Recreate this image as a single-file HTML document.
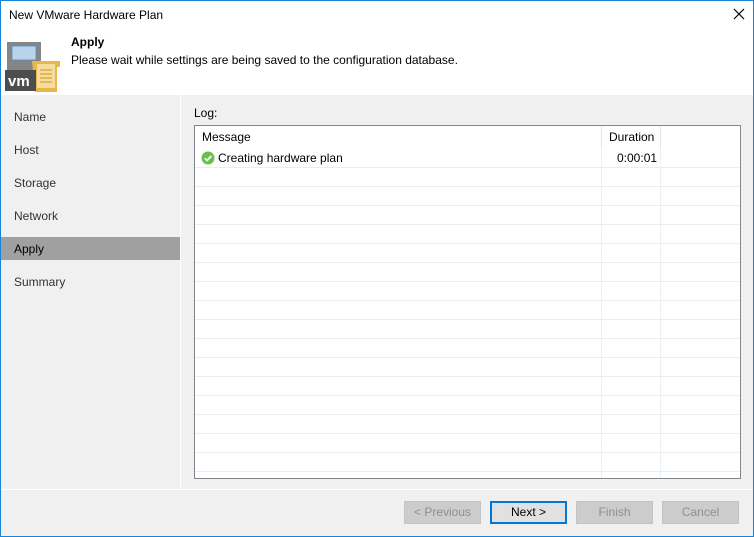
<!DOCTYPE html>
<html><head><style>
*{margin:0;padding:0;box-sizing:border-box}
body{width:754px;height:537px;overflow:hidden;font-family:"Segoe UI","Liberation Sans",sans-serif;font-size:12px;color:#000;background:#f0f0f0;position:relative}
.abs{position:absolute}
#win{left:0;top:0;width:754px;height:537px;border:1px solid #1883d7}
.nav{left:14px;color:#333;font-size:12px}
.row{left:195px;width:544px;height:1px;background:#ececec}
.btn{top:501px;width:77px;height:23px;border:1px solid #c3c3c3;background:#cccccc;color:#8f8f8f;text-align:center;line-height:21px;font-size:12px}
</style></head><body>
<div class="abs" style="left:0;top:0;width:754px;height:95px;background:#fff"></div>
<div class="abs" style="left:9px;top:8px;font-size:12px">New VMware Hardware Plan</div>
<svg class="abs" style="left:733px;top:8px" width="12" height="12"><path d="M1 1L11 11M11 1L1 11" stroke="#000" stroke-width="1.2"/></svg>
<svg class="abs" style="left:5px;top:42px" width="55" height="50">
<rect x="2" y="0" width="34" height="28" fill="#858585"/>
<rect x="7" y="4" width="24" height="14" fill="#b7d3ee" stroke="#5a8ab8" stroke-width="0.8"/>
<path d="M27 19 h28 v6 h-3 v25 h-22 z" fill="#e8b64a"/>
<rect x="32" y="22" width="18" height="24" fill="#f6dc9a"/>
<path d="M35 28h12M35 32h12M35 36h12M35 40h12" stroke="#d3a23a" stroke-width="1.3"/>
<rect x="0" y="28" width="31" height="21" fill="#4d4d4d"/>
<text x="3" y="44" fill="#fff" font-family="Liberation Sans" font-weight="bold" font-size="15">vm</text>
</svg>
<div class="abs" style="left:71px;top:35px;font-weight:bold">Apply</div>
<div class="abs" style="left:71px;top:53px">Please wait while settings are being saved to the configuration database.</div>
<div class="abs" style="left:180px;top:95px;width:1px;height:394px;background:#fff"></div>
<div class="abs nav" style="top:110px">Name</div>
<div class="abs nav" style="top:143px">Host</div>
<div class="abs nav" style="top:176px">Storage</div>
<div class="abs nav" style="top:209px">Network</div>
<div class="abs" style="left:1px;top:237px;width:179px;height:23px;background:#a0a0a0"></div>
<div class="abs nav" style="top:242px;color:#000">Apply</div>
<div class="abs nav" style="top:275px">Summary</div>
<div class="abs" style="left:194px;top:106px">Log:</div>
<div class="abs" style="left:194px;top:125px;width:547px;height:354px;border:1px solid #828790;background:#fff"></div>
<div class="abs" style="left:601px;top:126px;width:1px;height:352px;background:#e9f0f8"></div>
<div class="abs" style="left:660px;top:126px;width:1px;height:352px;background:#e9f0f8"></div>
<div class="abs" style="left:601px;top:126px;width:1px;height:22px;background:#e5e5e5"></div>
<div class="abs" style="left:660px;top:126px;width:1px;height:22px;background:#e5e5e5"></div>
<div class="abs" style="left:202px;top:130px">Message</div>
<div class="abs" style="left:609px;top:130px">Duration</div>
<svg class="abs" style="left:201px;top:151px" width="14" height="14"><circle cx="7" cy="7" r="6.5" fill="#6cbf4a"/><path d="M3.8 7.2l2.3 2.3 4.2-4.5" stroke="#fff" stroke-width="1.8" fill="none"/></svg>
<div class="abs" style="left:218px;top:151px">Creating hardware plan</div>
<div class="abs" style="left:617px;top:151px">0:00:01</div>
<div class="abs row" style="top:167px"></div>
<div class="abs row" style="top:186px"></div>
<div class="abs row" style="top:205px"></div>
<div class="abs row" style="top:224px"></div>
<div class="abs row" style="top:243px"></div>
<div class="abs row" style="top:262px"></div>
<div class="abs row" style="top:281px"></div>
<div class="abs row" style="top:300px"></div>
<div class="abs row" style="top:319px"></div>
<div class="abs row" style="top:338px"></div>
<div class="abs row" style="top:357px"></div>
<div class="abs row" style="top:376px"></div>
<div class="abs row" style="top:395px"></div>
<div class="abs row" style="top:414px"></div>
<div class="abs row" style="top:433px"></div>
<div class="abs row" style="top:452px"></div>
<div class="abs row" style="top:471px"></div>
<div class="abs" style="left:1px;top:489px;width:752px;height:1px;background:#fff"></div>
<div class="abs btn" style="left:404px">&lt; Previous</div>
<div class="abs btn" style="left:490px;background:#e1e1e1;border:2px solid #0078d7;color:#000;line-height:19px">Next &gt;</div>
<div class="abs btn" style="left:576px">Finish</div>
<div class="abs btn" style="left:662px">Cancel</div>
<div id="win" class="abs"></div>
</body></html>
